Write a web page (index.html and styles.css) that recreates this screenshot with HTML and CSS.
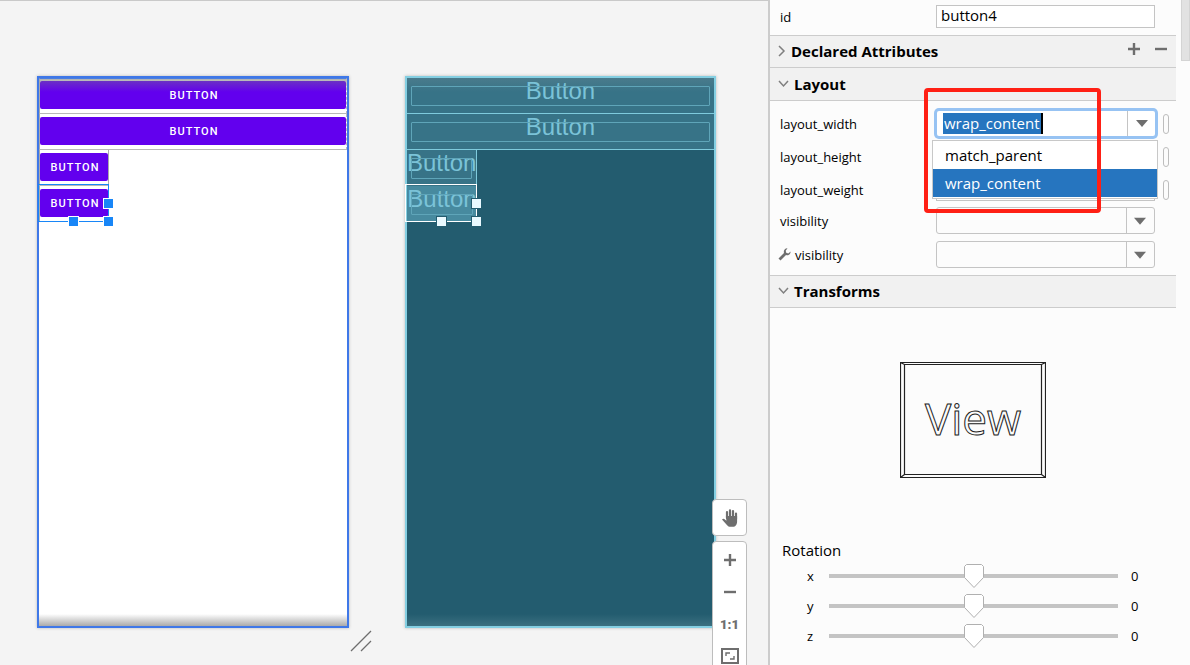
FILE: index.html
```html
<!DOCTYPE html>
<html lang="en">
<head>
<meta charset="utf-8">
<title>Layout Editor</title>
<link rel="stylesheet" href="styles.css">
</head>
<body>
<main class="surface">
  <section class="device design" aria-label="Design">
    <div class="cell wide"><button class="btn">BUTTON</button></div>
    <div class="cell wide"><button class="btn">BUTTON</button></div>
    <div class="cell small"><button class="btn">BUTTON</button></div>
    <div class="cell small selected"><button class="btn">BUTTON</button>
      <i class="frame"></i><i class="handle east"></i><i class="handle south"></i><i class="handle corner"></i>
    </div>
  </section>
  <section class="device blueprint" aria-label="Blueprint">
    <div class="cell wide"><span class="outline"></span><span class="caption">Button</span></div>
    <div class="cell wide"><span class="outline"></span><span class="caption">Button</span></div>
    <div class="cell small"><span class="outline"></span><span class="caption">Button</span></div>
    <div class="cell small selected"><span class="outline"></span><span class="caption">Button</span>
      <i class="frame"></i><i class="handle east"></i><i class="handle south"></i><i class="handle corner"></i>
    </div>
  </section>
  <svg class="grip" width="22" height="22" viewBox="0 0 22 22"><path d="M1 21L21 1M11 21L21 11" fill="none" stroke="#6e6e6e" stroke-width="1.3"/></svg>
  <div class="tools">
    <div class="toolbox">
      <button class="tool pan" aria-label="Pan"><svg width="18" height="20" viewBox="0 0 18 20"><g fill="none" stroke="#6e6e6e" stroke-width="2.2" stroke-linecap="round"><path d="M6 10V4M9 10V2.300M12 10V3M15 11V5.500"/></g><path d="M4.900 8h11.200v5.500c0 3-1.600 5.300-4.300 5.300H9.600c-1.600 0-2.700-.6-3.700-1.900L1 11.600c.9-1.200 2-1 2.900-.2l1.500 1.300z" fill="#6e6e6e"/></svg></button>
    </div>
    <div class="toolbox zoom">
      <button class="tool" aria-label="Zoom in"><svg width="14" height="14" viewBox="0 0 14 14"><path d="M7 1v12M1 7h12" stroke="#6e6e6e" stroke-width="2.400"/></svg></button>
      <button class="tool" aria-label="Zoom out"><svg width="14" height="14" viewBox="0 0 14 14"><path d="M1 7h12" stroke="#6e6e6e" stroke-width="2.400"/></svg></button>
      <button class="tool ratio">1:1</button>
      <button class="tool" aria-label="Zoom to fit"><svg width="18" height="16" viewBox="0 0 18 16"><path d="M1 1h16v14H1z" fill="none" stroke="#6e6e6e" stroke-width="2"/><path d="M5 8V5h4M13 8v3H9" fill="none" stroke="#6e6e6e" stroke-width="1.400"/></svg></button>
    </div>
  </div>
</main>
<aside class="panel">
  <div class="content">
    <div class="row id-row"><label for="id">id</label><input id="id" class="text" value="button4"></div>
    <h2 class="head closed"><svg width="8" height="12" viewBox="0 0 8 12"><path d="M1 1l5 5-5 5" fill="none" stroke="#7f7f7f" stroke-width="1.500"/></svg><span>Declared Attributes</span>
      <button class="mini" aria-label="Add"><svg width="14" height="14" viewBox="0 0 14 14"><path d="M7 1v12M1 7h12" stroke="#6e6e6e" stroke-width="2.400"/></svg></button>
      <button class="mini" aria-label="Remove"><svg width="14" height="14" viewBox="0 0 14 14"><path d="M1 7h12" stroke="#6e6e6e" stroke-width="2.400"/></svg></button>
    </h2>
    <h2 class="head"><svg width="11" height="8" viewBox="0 0 11 8"><path d="M1 1l4.500 5L10 1" fill="none" stroke="#7f7f7f" stroke-width="1.500"/></svg><span>Layout</span></h2>
    <div class="fields">
      <div class="row"><label for="lw">layout_width</label>
        <div class="combo"><input id="lw" class="combo-input" value="wrap_content"><button class="arrow" aria-label="Show options"><svg width="12" height="7" viewBox="0 0 12 7"><path d="M0 0h12L6 7z" fill="#6e6e6e"/></svg></button>
          <ul class="popup" role="listbox"><li role="option">match_parent</li><li role="option" class="on" aria-selected="true">wrap_content</li></ul>
          <div class="mark"></div>
        </div><button class="pill" aria-label="Pick width"></button></div>
      <div class="row"><label for="lh">layout_height</label><input id="lh" class="text"><button class="pill" aria-label="Pick height"></button></div>
      <div class="row"><label for="wt">layout_weight</label><input id="wt" class="text"><button class="pill" aria-label="Pick weight"></button></div>
      <div class="row short"><label for="v1">visibility</label><select id="v1" class="select"><option></option></select></div>
      <div class="row short"><label for="v2" class="tooled"><svg width="13" height="13" viewBox="0 0 13 13"><path d="M1.500 11.500L8 5" stroke="#6e6e6e" stroke-width="2.800"/><path d="M9.500.3C7.300.2 5.500 2 5.800 4.500L8.500 7.200C11 7.500 12.700 5.800 12.600 3.500L10.300 5.400 8.200 4.800 7.700 2.700z" fill="#6e6e6e"/></svg>visibility</label><select id="v2" class="select"><option></option></select></div>
    </div>
    <h2 class="head"><svg width="11" height="8" viewBox="0 0 11 8"><path d="M1 1l4.500 5L10 1" fill="none" stroke="#7f7f7f" stroke-width="1.500"/></svg><span>Transforms</span></h2>
    <svg class="view" width="146" height="116" viewBox="0 0 146 116"><g fill="none" stroke="#222" stroke-width="1.200"><path d="M.5.500h145v115H.5zM4.500 2.500h137v110h-137zM.5.500l4 2M145.500.500l-4 2M.5 115.500l4-3M145.500 115.500l-4-3"/></g><text class="view-text" x="73" y="73" text-anchor="middle">View</text></svg>
    <div class="rotation">
      <h3 class="sub">Rotation</h3>
      <div class="turn"><label for="rx">x</label><input id="rx" type="range" min="-360" max="360" value="0"><output>0</output></div>
      <div class="turn"><label for="ry">y</label><input id="ry" type="range" min="-360" max="360" value="0"><output>0</output></div>
      <div class="turn"><label for="rz">z</label><input id="rz" type="range" min="-360" max="360" value="0"><output>0</output></div>
    </div>
  </div>
  <div class="scroll"><div class="bar"></div></div>
</aside>
</body>
</html>
```

FILE: styles.css
```css
* { box-sizing: border-box; }
body {
  margin: 0;
  height: 100vh;
  display: flex;
  overflow: hidden;
  background: #f4f4f4;
  color: #000;
  font: 13px "Open Sans", "Noto Sans", sans-serif;
}
button, input, select { font: inherit; color: inherit; margin: 0; padding: 0; border: 0; }
button { background: none; }
svg { display: block; }

/* editing surface */
.surface {
  position: relative;
  flex: 1;
  min-width: 0;
  display: flex;
  align-items: flex-start;
  padding: 75px 0 0 37px;
  border-top: 1px solid #c9c9c9;
  overflow: hidden;
}
.device {
  flex: none;
  width: 312px;
  height: 552px;
  border: 2px solid #3f78e8;
  box-shadow: 0 0 3px #bbb;
}
.design { background: linear-gradient(#aaa, #fff 14px, #fff 536px, #aaa); }
.cell { position: relative; height: 36px; }
.wide { border-bottom: 1px solid #b8b8b8; border-right: 1px dashed #bbb; }
.small { width: 70px; border-right: 1px solid #aaa; }
.design .cell { padding-top: 3px; border-left: 1px solid #aaa; }
.design .small { border-bottom: 1px solid #b8b8b8; }
.btn {
  display: block;
  width: 100%;
  height: 28px;
  padding-left: 2px;
  border-radius: 2px;
  background: #6200ee;
  color: #fff;
  font: 500 11px Roboto, sans-serif;
  letter-spacing: 1px;
}
.design .wide:first-child { border-top: 1px solid #4a7fe0; padding-top: 2px; }
.design .wide:first-child .btn { background: linear-gradient(#6b30c4, #6200ee 11px); }
.frame { position: absolute; inset: -2px -1px -1px -2px; border: 1px solid #1886f7; }
.handle { position: absolute; width: 9px; height: 9px; background: #1886f7; box-shadow: 0 0 0 1px #fff; }
.east { right: -5px; top: 13px; }
.south { left: 29px; bottom: -5px; }
.corner { right: -5px; bottom: -5px; }

.blueprint {
  margin-left: 56px;
  width: 311px;
  border-color: #84cfe2;
  background: linear-gradient(transparent 536px, #3b7080), #235c6f;
}
.blueprint .cell { background: #377387; border-color: #7fcbdd; }
.blueprint .wide { border-right: 0; }
.blueprint .wide:first-child { background: linear-gradient(#4a7b8c, #377387 14px); }
.blueprint .small { border-right: 1px solid #7fcbdd; }
.blueprint .selected { background: #478a9f; border-right: 0; }
.outline { position: absolute; inset: 8px 4px 7px 4px; border: 1px solid #5fa5b9; border-radius: 1px; }
.caption {
  display: block;
  color: #7bc3d8;
  text-align: center;
  font: 24px/26px "Liberation Sans", Arial, sans-serif;
}
.blueprint .frame { right: 0; bottom: 0; border-color: #fff; }
.blueprint .handle { background: #e9f9ff; box-shadow: 0 0 0 1px #235c6f; }
.blueprint .east { right: -4px; }
.blueprint .corner { right: -4px; bottom: -4px; }
.blueprint .south { left: 30px; bottom: -4px; }
.grip { position: absolute; left: 350px; top: 629px; }

.tools {
  position: absolute;
  right: 21px;
  top: 498px;
  width: 35px;
  display: flex;
  flex-direction: column;
  gap: 5px;
}
.toolbox { border: 1px solid #bdbdbd; border-radius: 4px; background: #fff; }
.zoom { padding: 2px 0; }
.tool { display: flex; width: 100%; height: 32px; align-items: center; justify-content: center; }
.pan { height: 35px; }
.ratio { color: #6e6e6e; font: 900 13px Roboto, sans-serif; }

/* attributes panel */
.panel { flex: 0 0 422px; min-width: 0; display: flex; border-left: 2px solid #ccc; background: #fcfcfc; }
.content { flex: 1; min-width: 0; }
.scroll { width: 14px; padding-left: 5px; }
.bar { height: 61px; background: #e2e2e2; border: 1px solid #d4d4d4; border-top: 0; }
.row {
  display: grid;
  grid-template-columns: 156px minmax(0, 1fr) 14px;
  align-items: center;
  height: 33px;
  padding-left: 10px;
}
.row > :nth-child(2) { margin-right: 7px; }
.id-row { height: 35px; padding-bottom: 3px; }
.id-row label { padding-top: 2px; }
.text { height: 23px; min-width: 0; border: 1px solid #c4c4c4; background: #fff; padding: 0 4px 2px; font-size: 15px; }
.head {
  display: flex;
  align-items: center;
  gap: 5px;
  height: 33px;
  margin: 0;
  padding: 0 8px 1px;
  border-top: 1px solid #ccc;
  border-bottom: 1px solid #ccc;
  background: #f1f1f1;
  font-size: 15px;
  font-weight: 700;
}
.head + .head { margin-top: -1px; height: 34px; padding-bottom: 0; }
.head span { flex: 1; padding-bottom: 1px; }
.mini { padding-bottom: 4px; margin-left: 8px; }
.fields { padding: 6px 0 7px; }
.short { height: 27px; margin-top: 1px; }
.short + .short { margin-top: 7px; }
.combo {
  position: relative;
  display: flex;
  height: 25px;
  margin-left: 1px;
  border-radius: 2px;
  background: #fff;
  box-shadow: 0 0 0 3px #97c3f3;
}
.combo-input {
  flex: 1;
  min-width: 0;
  padding: 0 7px 2px;
  color: #fff;
  font-size: 15px;
  background: linear-gradient(90deg, #2675bf 98px, #000 98px) 6px 2px / 100px 21px no-repeat;
}
.arrow { width: 28px; display: flex; align-items: center; justify-content: center; border-left: 1px solid #c4c4c4; }
.popup {
  position: absolute;
  z-index: 1;
  left: -5px;
  right: -3px;
  top: 29px;
  margin: 0;
  padding: 0 0 1px;
  list-style: none;
  border: 1px solid #c8c8c8;
  background: #fff;
  font-size: 15px;
  line-height: 28px;
}
.popup li { padding-left: 12px; }
.popup .on { background: #2675bf; color: #fff; }
.mark { position: absolute; z-index: 2; left: -13px; top: -23px; width: 177px; height: 125px; border: 4px solid #ff2015; border-radius: 4px; }
.pill { width: 6px; height: 20px; border: 1px solid #bdbdbd; border-radius: 3px; justify-self: start; margin-left: 1px; }
.select {
  appearance: none;
  height: 27px;
  border: 1px solid #c4c4c4;
  border-radius: 3px;
  background:
    url("data:image/svg+xml,%3Csvg xmlns='http://www.w3.org/2000/svg' width='28' height='26'%3E%3Cpath d='M.5 0v26' stroke='%23c4c4c4'/%3E%3Cpath d='M8 10h12l-6 7z' fill='%236e6e6e'/%3E%3C/svg%3E") right center no-repeat #fcfcfc;
}
.tooled { display: flex; align-items: center; gap: 4px; margin-left: -2px; }
.view { margin: 54px auto 0; }
.view-text { font: 500 44px "Open Sans", "Noto Sans", sans-serif; fill: none; stroke: #222; stroke-width: 1px; }
.rotation { padding: 62px 37px 0 12px; }
.sub { margin: 0; font-size: 15px; font-weight: 400; line-height: 21px; }
.turn { display: grid; grid-template-columns: 47px 1fr 21px; align-items: center; height: 30px; }
.turn label { padding-left: 25px; }
.turn output { padding-left: 13px; }
.turn input { appearance: none; width: 100%; height: 24px; background: linear-gradient(#c4c4c4, #c4c4c4) center / 100% 4px no-repeat; }
.turn input::-webkit-slider-thumb {
  appearance: none;
  width: 20px;
  height: 24px;
  background: url("data:image/svg+xml,%3Csvg xmlns='http://www.w3.org/2000/svg' width='20' height='24'%3E%3Cpath d='M2.500.5h15l2 2v11L10 23.500.5 13.500v-11z' fill='white' stroke='%23b0b0b0'/%3E%3C/svg%3E") no-repeat;
}
```
